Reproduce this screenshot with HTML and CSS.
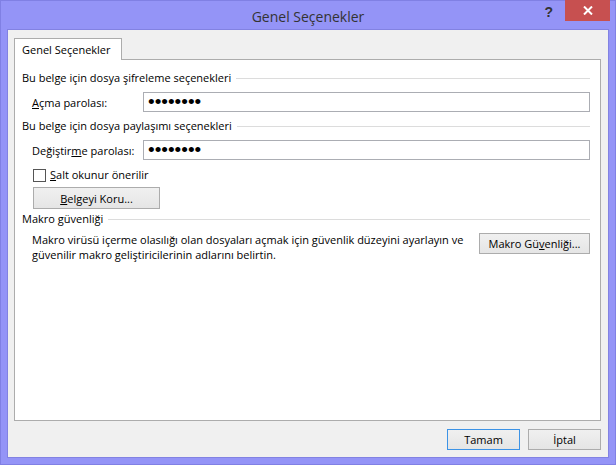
FILE: index.html
```html
<!DOCTYPE html>
<html lang="tr">
<head>
    <meta charset="UTF-8">
    <title>Genel Seçenekler</title>
    <link rel="stylesheet" href="styles.css">
</head>
<body>
    <div class="window">
        <div class="titlebar">
            <span class="title">Genel Seçenekler</span>
            <div class="controls">
                <span class="help">?</span>
                <span class="close">
                    <svg width="10" height="9" viewBox="0 0 10 9"><path d="M1 0.5 L9 8.5 M9 0.5 L1 8.5" stroke="#fff" stroke-width="2"/></svg>
                </span>
            </div>
        </div>
        <div class="client">
            <div class="tabs">
                <div class="tab">Genel Seçenekler</div>
            </div>
            <div class="panel">
                <div class="section first">Bu belge için dosya şifreleme seçenekleri</div>
                <div class="field">
                    <label for="openPass"><u>A</u>çma parolası:</label>
                    <input type="password" id="openPass" value="12345678">
                </div>
                <div class="section">Bu belge için dosya paylaşımı seçenekleri</div>
                <div class="field">
                    <label for="modifyPass">Değiştir<u>m</u>e parolası:</label>
                    <input type="password" id="modifyPass" value="12345678">
                </div>
                <label class="check-row"><span class="checkbox"></span><span><u>S</u>alt okunur önerilir</span></label>
                <button class="btn protect"><u>B</u>elgeyi Koru...</button>
                <div class="section macro">Makro güvenliği</div>
                <div class="macro-row">
                    <p>Makro virüsü içerme olasılığı olan dosyaları açmak için güvenlik düzeyini ayarlayın ve<br>güvenilir makro geliştiricilerinin adlarını belirtin.</p>
                    <button class="btn macro-btn">Makro Gü<u>v</u>enliği...</button>
                </div>
            </div>
            <div class="actions">
                <button class="btn default">Tamam</button>
                <button class="btn">İptal</button>
            </div>
        </div>
    </div>
</body>
</html>
```

FILE: styles.css
```css
* {
   box-sizing: border-box;
}
body {
   margin: 0;
   font-family: "Segoe UI", "Open Sans", sans-serif;
   font-size: 11px;
   color: #000;
   background: #9494f7;
}
.window {
   height: 100vh;
   border: 1px solid #8080e4;
   background: #9494f7;
   display: flex;
   flex-direction: column;
}
.titlebar {
   height: 28px;
   position: relative;
   display: flex;
   align-items: center;
   justify-content: center;
}
.title {
   font-size: 14px;
   color: #333;
   padding-top: 2px;
}
.controls {
   position: absolute; /* window buttons sit over the title bar */
   right: 5px;
   top: -1px;
   display: flex;
   align-items: flex-start;
}
.help {
   font-family: "Liberation Sans", sans-serif;
   font-weight: bold;
   font-size: 14px;
   color: #333;
   margin: 4px 12px 0 0;
}
.close {
   width: 45px;
   height: 21px;
   background: #c75050;
   display: flex;
   align-items: center;
   justify-content: center;
}
.client {
   flex: 1;
   margin: 0 6px 6px 6px;
   border: 1px solid #8282e2;
   background: #f0f0f0;
   padding: 8px 7px 7px 6px;
   display: flex;
   flex-direction: column;
}
.tabs {
   display: flex;
}
.tab {
   width: 108px;
   height: 22px;
   margin-bottom: -1px;
   border: 1px solid #acacac;
   border-bottom: none;
   background: #fff;
   padding: 3px 0 0 7px;
   position: relative;
   z-index: 1;
}
.panel {
   flex: 1;
   background: #fff;
   border: 1px solid #acacac;
   padding: 0 10px 0 7px;
   display: flex;
   flex-direction: column;
   align-items: flex-start;
}
.section {
   align-self: stretch;
   display: flex;
   align-items: center;
   line-height: 16px;
   margin-top: 6px;
   white-space: nowrap;
}
.section::after {
   content: "";
   flex: 1;
   height: 1px;
   background: #dcdcdc;
   margin-left: 5px;
}
.section.first {
   margin-top: 10px;
}
.section.macro {
   margin-top: 2px;
}
.field {
   align-self: stretch;
   display: flex;
   align-items: center;
   margin-top: 6px;
   padding-left: 10px;
}
.field label {
   flex: none;
   width: 111px;
   white-space: nowrap;
}
.field input {
   flex: 1;
   min-width: 0;
   height: 20px;
   border: 1px solid #abadb3;
   padding: 0 4px;
   font-family: "Liberation Sans", sans-serif;
   font-size: 19px;
   color: #000;
   outline: none;
}
.check-row {
   display: flex;
   align-items: center;
   line-height: 16px;
   margin: 7px 0 0 11px;
}
.checkbox {
   width: 13px;
   height: 13px;
   border: 1px solid #555;
   background: #fff;
   margin-right: 4px;
}
.btn {
   font-family: inherit;
   font-size: 11px;
   color: #000;
   height: 22px;
   border: 1px solid #acacac;
   background: linear-gradient(#f0f0f0, #e5e5e5);
   padding: 0;
}
.protect {
   width: 127px;
   margin: 4px 0 0 11px;
}
.macro-row {
   align-self: stretch;
   display: flex;
   align-items: flex-start;
   justify-content: space-between;
   margin-top: 5px;
   padding-left: 10px;
}
.macro-row p {
   margin: 0;
   line-height: 15px;
   white-space: nowrap;
}
.macro-btn {
   flex: none;
   width: 111px;
   height: 21px;
   margin-top: 1px;
}
.actions {
   display: flex;
   justify-content: flex-end;
   gap: 8px;
   margin-top: 8px;
}
.actions .btn {
   width: 73px;
   height: 21px;
}
.btn.default {
   border-color: #3c93e6;
}
```
